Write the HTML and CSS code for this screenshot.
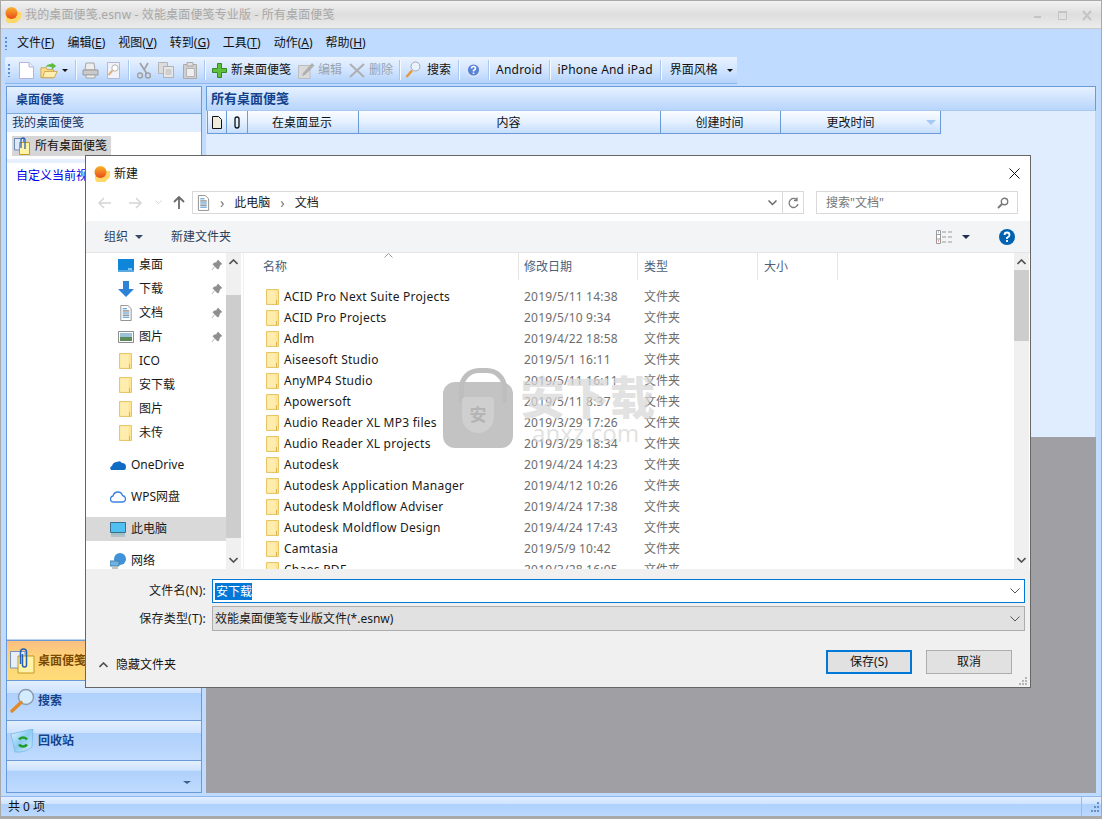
FILE: index.html
```html
<!DOCTYPE html>
<html lang="zh-CN">
<head>
<meta charset="utf-8">
<title>我的桌面便笺</title>
<link rel="stylesheet" href="styles.css">
</head>
<body>
<svg class="defs" width="0" height="0" aria-hidden="true">
  <defs>
    <linearGradient id="ball" x1="0" y1="0" x2="0" y2="1"><stop offset="0" stop-color="#fbb52c"/><stop offset="1" stop-color="#e8481a"/></linearGradient>
    <linearGradient id="bin" x1="0" y1="0" x2="1" y2="1"><stop offset="0" stop-color="#e6f5ff"/><stop offset=".5" stop-color="#8ccbf2"/><stop offset="1" stop-color="#d8eefc"/></linearGradient>
  </defs>
  <symbol id="folder" viewBox="0 0 13 16">
    <path d="M.5 .5H12.500V15.500H.5Z" fill="#fde595" stroke="#e8c667"/>
    <path d="M1.500 1.500H9.500V14.500H1.500Z" fill="#ffedb0"/>
    <path d="M10.500 11V15.500" stroke="#dcb44f" fill="none"/>
  </symbol>
  <symbol id="logo" viewBox="0 0 16 16">
    <path d="M1 5H16V11L11 16H3Q1 15 1 12Z" fill="#ffd766"/>
    <circle cx="6.500" cy="6" r="6" fill="url(#ball)"/>
  </symbol>
  <symbol id="pin" viewBox="0 0 12 12">
    <path d="M7 1L11 5L9.500 5.500L8 8V9.500L6.500 10L2 5.500L3 4L5.500 3.500L6.500 1.500ZM3.500 7.500L1 11" fill="#8e8e8e" stroke="#8e8e8e" stroke-width=".6"/>
  </symbol>
  <symbol id="doc" viewBox="0 0 14 17">
    <path d="M1.500 .5H9L12.500 4V16.500H1.500Z" fill="#fff" stroke="#8d8d8d"/>
    <path d="M3.500 4H8M3.500 8.500H10.500M3.500 13H10.500" stroke="#2a86d6"/>
    <path d="M3.500 6.300H10.500M3.500 10.800H10.500" stroke="#555"/>
  </symbol>
</svg>

<div class="app">
  <header class="titlebar">
    <svg class="ico16"><use href="#logo"/></svg>
    <span class="titletext">我的桌面便笺.esnw - 效能桌面便笺专业版 - 所有桌面便笺</span>
    <span class="winbtns">
      <svg width="60" height="12" viewBox="0 0 60 12"><path d="M1 8H8" stroke="#c4c4c4" stroke-width="2"/><path d="M25.500 2.500H33.500V10.500H25.500Z" fill="none" stroke="#c4c4c4"/><path d="M25 3H34" stroke="#c4c4c4" stroke-width="2"/><path d="M50 2L58 11M58 2L50 11" stroke="#c4c4c4" stroke-width="2"/></svg>
    </span>
  </header>

  <nav class="menubar">
    <i class="grip"></i>
    <span class="menu">文件(<u>F</u>)</span><span class="menu">编辑(<u>E</u>)</span><span class="menu">视图(<u>V</u>)</span><span class="menu">转到(<u>G</u>)</span><span class="menu">工具(<u>T</u>)</span><span class="menu">动作(<u>A</u>)</span><span class="menu">帮助(<u>H</u>)</span>
  </nav>

  <div class="toolbar">
    <i class="grip"></i>
    <svg class="tb w-new" width="15" height="17" viewBox="0 0 15 17"><path d="M.5 .5H10L14.500 5V16.500H.5Z" fill="#fff" stroke="#b5b5d8"/><path d="M10 .5V5H14.500" fill="#e8e8f4" stroke="#b5b5d8"/></svg>
    <svg class="tb w-open" width="18" height="17" viewBox="0 0 20 18"><path d="M1 6H7L8 8H15V17H1Z" fill="#fde08a" stroke="#c9a24a"/><path d="M3 17L5 10H19L16 17Z" fill="#ffeeb0" stroke="#c9a24a"/><path d="M6 5Q9 1 13 2V0L18 4L13 8V5Q9 4 6 5Z" fill="#5dbb3c"/></svg>
    <i class="caret small c-open"></i>
    <i class="sep s1"></i>
    <svg class="tb w-print" width="17" height="17" viewBox="0 0 17 17"><path d="M4 1H12L13 8H3Z" fill="#eee" stroke="#a5a5a5"/><path d="M1 8H16V13H1Z" fill="#c9c9c9" stroke="#9a9a9a"/><path d="M4 13H13V16H4Z" fill="#eee" stroke="#a5a5a5"/></svg>
    <svg class="tb w-prev" width="15" height="17" viewBox="0 0 15 17"><path d="M1.500 .5H13.500V16.500H1.500Z" fill="#f2f2fa" stroke="#b7b7cf"/><circle cx="9" cy="6" r="3.200" fill="#fff" stroke="#b5b5b5"/><path d="M6.500 8.500L2.500 13" stroke="#e2b27a" stroke-width="2"/></svg>
    <i class="sep s2"></i>
    <svg class="tb w-cut" width="14" height="17" viewBox="0 0 14 17"><path d="M3 1L10 12M11 1L7 8" stroke="#a0a0a0" stroke-width="1.600" fill="none"/><circle cx="3" cy="13.500" r="2.500" fill="none" stroke="#a0a0a0" stroke-width="1.400"/><circle cx="11" cy="13.500" r="2.500" fill="none" stroke="#a0a0a0" stroke-width="1.400"/></svg>
    <svg class="tb w-copy" width="16" height="16" viewBox="0 0 16 16"><path d="M.5 .5H9.500V11.500H.5Z" fill="#dcdcdc" stroke="#b5b5b5"/><path d="M5.500 4.500H15.500V15.500H5.500Z" fill="#e8e8e8" stroke="#b0b0b0"/><path d="M7.500 8H13.500M7.500 10H13.500M7.500 12H13.500" stroke="#b5b5b5"/></svg>
    <svg class="tb w-paste" width="16" height="17" viewBox="0 0 16 17"><path d="M1.500 2.500H14.500V16.500H1.500Z" fill="#cfcfcf" stroke="#aaa"/><path d="M5 .5H11V4H5Z" fill="#e0e0e0" stroke="#aaa"/><path d="M4.500 6.500H12.500V14.500H4.500Z" fill="#eee" stroke="#b5b5b5"/></svg>
    <i class="sep s3"></i>
    <svg class="tb w-plus" width="15" height="15" viewBox="0 0 15 15"><path d="M5.500 .5H9.500V5.500H14.500V9.500H9.500V14.500H5.500V9.500H.5V5.500H5.500Z" fill="#5fbf3b" stroke="#2f8a25"/></svg>
    <span class="tbtext t-new">新桌面便笺</span>
    <svg class="tb w-edit" width="17" height="17" viewBox="0 0 17 17"><path d="M.5 3.500H12V16.500H.5Z" fill="#dadada" stroke="#bdbdbd"/><path d="M5 11L14 1L16.500 3.500L7 13L4 14Z" fill="#b0b0b0"/></svg>
    <span class="tbtext dim t-edit">编辑</span>
    <svg class="tb w-del" width="16" height="15" viewBox="0 0 16 15"><path d="M1 1L15 14M15 1L1 14" stroke="#aeaeae" stroke-width="2"/></svg>
    <span class="tbtext dim t-del">删除</span>
    <i class="sep s4"></i>
    <svg class="tb w-find" width="16" height="18" viewBox="0 0 16 18"><circle cx="10.500" cy="5.500" r="4.500" fill="#e9f3ff" stroke="#a8a8a8"/><path d="M7 9.500L1.500 16" stroke="#e59a3e" stroke-width="2.600"/></svg>
    <span class="tbtext t-find">搜索</span>
    <i class="sep s5"></i>
    <svg class="tb w-help" width="15" height="16" viewBox="0 0 15 16"><circle cx="7.500" cy="8" r="7" fill="#dfe6f4"/><circle cx="7.500" cy="8" r="5.600" fill="#5a83d6"/><path d="M5.500 6.500Q5.500 4.500 7.500 4.500T9.500 6.500Q9.500 7.500 7.500 8.500V9.500M7.500 10.500V12" fill="none" stroke="#fff" stroke-width="1.500"/></svg>
    <i class="sep s6"></i>
    <span class="tbtext latin t-and">Android</span>
    <i class="sep s7"></i>
    <span class="tbtext latin t-iph">iPhone And iPad</span>
    <i class="sep s8"></i>
    <span class="tbtext t-ui">界面风格</span>
    <i class="caret small c-ui"></i>
  </div>

  <main class="workspace">
    <aside class="side">
      <h2 class="side-head">桌面便笺</h2>
      <div class="side-sub">我的桌面便笺</div>
      <div class="side-body">
        <div class="tree-sel">
          <svg width="17" height="18" viewBox="0 0 17 18"><path d="M.5 1.500H9.500V13H.5Z" fill="#dfe9fb" stroke="#6f89b6"/><path d="M5.500 5.500H15.500V17.500H5.500Z" fill="#fff3a8" stroke="#c29a1e"/><path d="M7 11V3Q7 1 9 1T11 3V12" fill="none" stroke="#2b62b4" stroke-width="1.300"/></svg>
          <span>所有桌面便笺</span>
        </div>
        <div class="side-band"></div>
        <a class="side-link">自定义当前视图</a>
      </div>
      <div class="navbtn active">
        <svg width="25" height="26" viewBox="0 0 25 26"><path d="M.5 3.500H15V20H.5Z" fill="#e8effa" stroke="#7a93bd"/><path d="M8 8H24V25H8Z" fill="#fff3a8" stroke="#c29a1e"/><path d="M10.500 16V4Q10.500 1 13.500 1T16.500 4V17Q16.500 19 14.500 19T12.500 17V6" fill="none" stroke="#2460b4" stroke-width="1.500"/></svg>
        <span>桌面便笺</span>
      </div>
      <div class="navbtn">
        <svg width="25" height="25" viewBox="0 0 25 25"><circle cx="16" cy="9" r="7.500" fill="#d4ecff" stroke="#8a9bb0" stroke-width="1.400"/><path d="M11 14.500L2 23" stroke="#e08a2a" stroke-width="3.400" stroke-linecap="round"/></svg>
        <span>搜索</span>
      </div>
      <div class="navbtn">
        <svg width="25" height="24" viewBox="0 0 25 24"><path d="M1 5L23 0L22 18Q15 24 5 23Z" fill="url(#bin)" stroke="#6fb5e6" stroke-width=".7"/><path d="M9 10.500A5 5 0 0 1 17 10.500M17 15.500A5 5 0 0 1 9 15.500" fill="none" stroke="#1f9d2b" stroke-width="2.600"/></svg>
        <span>回收站</span>
      </div>
      <div class="navbtn last"><i class="caret tiny"></i></div>
    </aside>

    <section class="content">
      <h2 class="content-head">所有桌面便笺</h2>
      <div class="content-body">
        <div class="thead">
          <div class="th c1"><svg width="10" height="13" viewBox="0 0 10 13"><path d="M.5 .5H6.500L9.500 3.500V12.500H.5Z" fill="#f1eddd" stroke="#111"/></svg></div>
          <div class="th c2"><svg width="8" height="13" viewBox="0 0 8 13"><path d="M2 10V3Q2 1 4 1T6 3V10Q6 12 4 12T2 10V4" fill="none" stroke="#111" stroke-width="1.300"/></svg></div>
          <div class="th c3">在桌面显示</div>
          <div class="th c4">内容</div>
          <div class="th c5">创建时间</div>
          <div class="th c6">更改时间<i class="sortmark"></i></div>
        </div>
      </div>
      <div class="mdi"></div>
    </section>
  </main>

  <footer class="status">
    <span>共 0 项</span>
    <span class="status-grip">
      <svg width="14" height="12" viewBox="0 0 14 12"><path d="M10 1H12M7 5H9M10 5H12M4 9H6M7 9H9M10 9H12" stroke="#6b8fc0" stroke-width="2" stroke-dasharray="2 1"/></svg>
    </span>
  </footer>
</div>

<div class="dialog">
  <div class="dlg-title">
    <svg class="ico16"><use href="#logo"/></svg>
    <span>新建</span>
    <svg class="dlg-close" width="11" height="11" viewBox="0 0 11 11"><path d="M.5 .5L10.500 10.500M10.500 .5L.5 10.500" stroke="#111" stroke-width="1"/></svg>
  </div>

  <div class="dlg-nav">
    <svg class="arrow a1" width="14" height="12" viewBox="0 0 14 12"><path d="M6 1L1 6L6 11M1 6H13" fill="none" stroke="#d5d5d5" stroke-width="1.500"/></svg>
    <svg class="arrow a2" width="14" height="12" viewBox="0 0 14 12"><path d="M8 1L13 6L8 11M13 6H1" fill="none" stroke="#d5d5d5" stroke-width="1.500"/></svg>
    <svg class="arrow a3" width="7" height="5" viewBox="0 0 7 5"><path d="M.5 .5L3.500 3.500L6.500 .5" fill="none" stroke="#d5d5d5"/></svg>
    <svg class="arrow a4" width="12" height="13" viewBox="0 0 12 13"><path d="M1 6L6 1L11 6M6 1V13" fill="none" stroke="#6a6a6a" stroke-width="1.800"/></svg>
    <div class="addr">
      <svg class="addr-doc" width="13" height="16"><use href="#doc"/></svg>
      <span class="crumbsep">›</span><span class="crumb">此电脑</span><span class="crumbsep">›</span><span class="crumb">文档</span>
      <span class="addr-end">
        <svg width="9" height="6" viewBox="0 0 9 6"><path d="M.5 .5L4.500 4.500L8.500 .5" fill="none" stroke="#6a6a6a" stroke-width="1.500"/></svg>
        <i class="addr-div"></i>
        <svg width="11" height="12" viewBox="0 0 11 12"><path d="M9 3A4.500 4.500 0 1 0 10 7M9 .5V3.500H6" fill="none" stroke="#7a7a7a" stroke-width="1.300"/></svg>
      </span>
    </div>
    <div class="searchbox">
      <span>搜索"文档"</span>
      <svg width="12" height="12" viewBox="0 0 12 12"><circle cx="7.500" cy="4.500" r="3.200" fill="none" stroke="#7a7a7a" stroke-width="1.400"/><path d="M5 7L1 11" stroke="#7a7a7a" stroke-width="2"/></svg>
    </div>
  </div>

  <div class="dlg-cmd">
    <span class="cmd">组织</span><i class="cmdcaret"></i>
    <span class="cmd new">新建文件夹</span>
    <span class="cmd-right">
      <svg width="16" height="14" viewBox="0 0 16 14"><path d="M.5 .5H4.500V13.500H.5ZM.5 4.500H4.500M.5 9H4.500" fill="#fff" stroke="#9a9a9a"/><path d="M6 2H10M12 2H16M6 7H10M12 7H16M6 12H10M12 12H16" stroke="#9a9a9a"/><path d="M2 2H3" stroke="#3a8fd6"/><path d="M2 11H3" stroke="#e04040"/></svg>
      <i class="cmdcaret dark"></i>
      <svg class="helpdot" width="16" height="16" viewBox="0 0 16 16"><circle cx="8" cy="8" r="8" fill="#0063b1"/><path d="M5.500 6Q5.500 3.500 8 3.500T10.500 6Q10.500 7.500 8 8.700V10M8 11V13" fill="none" stroke="#fff" stroke-width="1.800"/></svg>
    </span>
  </div>

  <div class="dlg-main">
    <div class="tree">
      <div class="tree-row"><svg class="ti" width="16" height="13" viewBox="0 0 16 13"><path d="M0 0H16V11H0Z" fill="#0f86d8"/><path d="M0 11H16V13H0Z" fill="#5aa9e0"/><path d="M10 10H14" stroke="#fff"/></svg><span>桌面</span><svg class="pin" width="12" height="12"><use href="#pin"/></svg></div>
      <div class="tree-row"><svg class="ti" width="16" height="16" viewBox="0 0 16 16"><path d="M5 0H11V8H16L8 16L0 8H5Z" fill="#2c82d6"/></svg><span>下载</span><svg class="pin" width="12" height="12"><use href="#pin"/></svg></div>
      <div class="tree-row"><svg class="ti" width="16" height="16" viewBox="0 0 14 17"><use href="#doc"/></svg><span>文档</span><svg class="pin" width="12" height="12"><use href="#pin"/></svg></div>
      <div class="tree-row"><svg class="ti" width="16" height="12" viewBox="0 0 16 12"><path d="M.5 .5H15.500V11.500H.5Z" fill="#fff" stroke="#8d8d8d"/><path d="M2 2H14V6H2Z" fill="#9cc1d8"/><path d="M2 6H14V10H2Z" fill="#5e8a5a"/></svg><span>图片</span><svg class="pin" width="12" height="12"><use href="#pin"/></svg></div>
      <div class="tree-row"><svg class="ti f" width="13" height="16"><use href="#folder"/></svg><span>ICO</span></div>
      <div class="tree-row"><svg class="ti f" width="13" height="16"><use href="#folder"/></svg><span>安下载</span></div>
      <div class="tree-row"><svg class="ti f" width="13" height="16"><use href="#folder"/></svg><span>图片</span></div>
      <div class="tree-row"><svg class="ti f" width="13" height="16"><use href="#folder"/></svg><span>未传</span></div>
      <div class="tree-row top"><svg class="ti" width="16" height="10" viewBox="0 0 16 10"><path d="M1 10Q-1 7 2 6Q3 2 7 2Q10 0 12 3Q16 3 16 7Q16 10 14 10Z" fill="#0f6cc4"/></svg><span>OneDrive</span></div>
      <div class="tree-row top"><svg class="ti" width="16" height="12" viewBox="0 0 16 12"><path d="M3.500 11Q.5 11 .5 8Q.5 5.500 3 5Q4 1 8 1Q11.500 1 12.500 4.500Q15.500 5 15.500 8Q15.500 11 12.500 11Z" fill="#fff" stroke="#3b82e0" stroke-width="1.300"/></svg><span>WPS网盘</span></div>
      <div class="tree-row sel"><svg class="ti" width="16" height="15" viewBox="0 0 16 15"><path d="M.5 .5H15.500V10.500H.5Z" fill="#50c0f0" stroke="#3b6f90"/><path d="M1 12H15" stroke="#6aa"/><path d="M1 14H15" stroke="#8fa9bd"/></svg><span>此电脑</span></div>
      <div class="tree-row"><svg class="ti" width="16" height="16" viewBox="0 0 16 16"><circle cx="10" cy="6" r="6" fill="#3f93d8"/><path d="M0 8H9V13H0Z" fill="#6fb2e4" stroke="#4a7fa8"/><path d="M2 15H8" stroke="#888"/></svg><span>网络</span></div>
    </div>
    <div class="vscroll nav">
      <svg class="sb-a" width="9" height="6" viewBox="0 0 9 6"><path d="M.5 5L4.500 1L8.500 5" fill="none" stroke="#505050" stroke-width="1.600"/></svg>
      <i class="thumb t-nav"></i>
      <svg class="sb-a" width="9" height="6" viewBox="0 0 9 6"><path d="M.5 1L4.500 5L8.500 1" fill="none" stroke="#505050" stroke-width="1.600"/></svg>
    </div>
    <div class="list">
      <div class="lhead">
        <div class="lh h1">名称<svg class="sortcaret" width="9" height="5" viewBox="0 0 9 5"><path d="M.5 4.500L4.500 .5L8.500 4.500" fill="none" stroke="#9a9a9a"/></svg></div>
        <div class="lh h2">修改日期</div>
        <div class="lh h3">类型</div>
        <div class="lh h4">大小</div>
      </div>
      <div class="lrows">
        <div class="lrow"><div class="lname"><svg width="13" height="16"><use href="#folder"/></svg><span>ACID Pro Next Suite Projects</span></div><div class="ldate">2019/5/11 14:38</div><div class="ltype">文件夹</div></div>
        <div class="lrow"><div class="lname"><svg width="13" height="16"><use href="#folder"/></svg><span>ACID Pro Projects</span></div><div class="ldate">2019/5/10 9:34</div><div class="ltype">文件夹</div></div>
        <div class="lrow"><div class="lname"><svg width="13" height="16"><use href="#folder"/></svg><span>Adlm</span></div><div class="ldate">2019/4/22 18:58</div><div class="ltype">文件夹</div></div>
        <div class="lrow"><div class="lname"><svg width="13" height="16"><use href="#folder"/></svg><span>Aiseesoft Studio</span></div><div class="ldate">2019/5/1 16:11</div><div class="ltype">文件夹</div></div>
        <div class="lrow"><div class="lname"><svg width="13" height="16"><use href="#folder"/></svg><span>AnyMP4 Studio</span></div><div class="ldate">2019/5/11 16:11</div><div class="ltype">文件夹</div></div>
        <div class="lrow"><div class="lname"><svg width="13" height="16"><use href="#folder"/></svg><span>Apowersoft</span></div><div class="ldate">2019/5/11 8:37</div><div class="ltype">文件夹</div></div>
        <div class="lrow"><div class="lname"><svg width="13" height="16"><use href="#folder"/></svg><span>Audio Reader XL MP3 files</span></div><div class="ldate">2019/3/29 17:26</div><div class="ltype">文件夹</div></div>
        <div class="lrow"><div class="lname"><svg width="13" height="16"><use href="#folder"/></svg><span>Audio Reader XL projects</span></div><div class="ldate">2019/3/29 18:34</div><div class="ltype">文件夹</div></div>
        <div class="lrow"><div class="lname"><svg width="13" height="16"><use href="#folder"/></svg><span>Autodesk</span></div><div class="ldate">2019/4/24 14:23</div><div class="ltype">文件夹</div></div>
        <div class="lrow"><div class="lname"><svg width="13" height="16"><use href="#folder"/></svg><span>Autodesk Application Manager</span></div><div class="ldate">2019/4/12 10:26</div><div class="ltype">文件夹</div></div>
        <div class="lrow"><div class="lname"><svg width="13" height="16"><use href="#folder"/></svg><span>Autodesk Moldflow Adviser</span></div><div class="ldate">2019/4/24 17:38</div><div class="ltype">文件夹</div></div>
        <div class="lrow"><div class="lname"><svg width="13" height="16"><use href="#folder"/></svg><span>Autodesk Moldflow Design</span></div><div class="ldate">2019/4/24 17:43</div><div class="ltype">文件夹</div></div>
        <div class="lrow"><div class="lname"><svg width="13" height="16"><use href="#folder"/></svg><span>Camtasia</span></div><div class="ldate">2019/5/9 10:42</div><div class="ltype">文件夹</div></div>
        <div class="lrow"><div class="lname"><svg width="13" height="16"><use href="#folder"/></svg><span>Chaos PDF</span></div><div class="ldate">2019/3/28 16:05</div><div class="ltype">文件夹</div></div>
      </div>
    </div>
    <div class="vscroll main">
      <svg class="sb-a" width="9" height="6" viewBox="0 0 9 6"><path d="M.5 5L4.500 1L8.500 5" fill="none" stroke="#505050" stroke-width="1.600"/></svg>
      <i class="thumb t-main"></i>
      <svg class="sb-a" width="9" height="6" viewBox="0 0 9 6"><path d="M.5 1L4.500 5L8.500 1" fill="none" stroke="#505050" stroke-width="1.600"/></svg>
    </div>
  </div>

  <div class="dlg-foot">
    <div class="field">
      <label>文件名(N):</label>
      <div class="combo focus"><span class="selected">安下载</span><svg width="10" height="6" viewBox="0 0 10 6"><path d="M.5 .5L5 5L9.500 .5" fill="none" stroke="#555"/></svg></div>
    </div>
    <div class="field second">
      <label>保存类型(T):</label>
      <div class="combo gray"><span class="plain">效能桌面便笺专业版文件(*.esnw)</span><svg width="10" height="6" viewBox="0 0 10 6"><path d="M.5 .5L5 5L9.500 .5" fill="none" stroke="#555"/></svg></div>
    </div>
    <div class="foot-actions">
      <span class="hide">
        <svg width="9" height="6" viewBox="0 0 9 6"><path d="M.5 5L4.500 1L8.500 5" fill="none" stroke="#505050" stroke-width="1.600"/></svg>
        隐藏文件夹
      </span>
      <span class="btn primary">保存(S)</span>
      <span class="btn">取消</span>
    </div>
    <svg class="dlg-grip" width="9" height="9" viewBox="0 0 9 9"><path d="M7 1H9V3H7ZM4 4H6V6H4ZM7 4H9V6H7ZM1 7H3V9H1ZM4 7H6V9H4ZM7 7H9V9H7Z" fill="#b5b5b5"/></svg>
  </div>
</div>

<div class="watermark">
  <div class="wm-bag"><span>安</span></div>
  <div class="wm-text"><div class="wm-cn">安下载</div><div class="wm-en">anxz.com</div></div>
</div>
</body>
</html>
```

FILE: styles.css
```css
* { box-sizing: border-box; }
html, body { margin: 0; padding: 0; }
body {
  width: 1102px; height: 819px; overflow: hidden; position: relative;
  font: 12px/16px "Noto Sans", "Noto Sans CJK SC", sans-serif;
  color: #111; background: #bfdbff;
}
.defs { position: absolute; }
.ico16 { width: 16px; height: 16px; flex: none; }
i { display: block; flex: none; }

/* main window */
.app { width: 1102px; height: 819px; display: flex; flex-direction: column; border: solid #a9a9a9; border-width: 1px 1px 3px 1px; }
.titlebar {
  height: 28px; flex: none; display: flex; align-items: center; padding: 0 5px 0 4px; gap: 4px;
  background: linear-gradient(#f2f2f2, #e6e6e6 30%, #dedede 50%, #ececec);
  border-bottom: 1px solid #c9c9c9;
}
.titletext { color: #a8a8a8; font-size: 12px; letter-spacing: .15px; }
.winbtns { margin-left: auto; display: flex; padding-right: 3px; }

.menubar { height: 28px; flex: none; display: flex; align-items: center; padding-left: 4px; background: #bfdbff; }
.grip { width: 2px; height: 13px; background: repeating-linear-gradient(#5b8fd6 0 2px, transparent 2px 4px); }
.menu { margin-right: 13px; color: #111; }
.menubar .grip { margin-right: 10px; }
.menu u { text-decoration: underline; }

.toolbar {
  height: 27px; flex: none; width: 732px; margin-left: 4px; display: flex; align-items: center; padding-left: 3px;
  background: linear-gradient(#eaf3ff, #cfe3ff 55%, #b4d2fb);
  border-bottom: 1px solid #8cb6ec; border-radius: 2px 0 0 0;
}
.tb { flex: none; }
.sep { width: 1px; height: 20px; background: #f5faff; box-shadow: -1px 0 0 #a9c8ef; flex: none; }
.tbtext { flex: none; }
.tbtext.dim { color: #9aa3ad; }
.tbtext.latin { letter-spacing: .2px; }
.caret { width: 0; height: 0; border: solid transparent; flex: none; }
.caret.small { border-width: 3px 3px 0; border-top-color: #111; }
.caret.tiny { border-width: 3px 4px 0; border-top-color: #3f5f8f; }
.w-new { margin-left: 9px; }
.w-open { margin-left: 6px; }
.c-open { margin-left: 4px; }
.s1 { margin-left: 8px; }
.w-print { margin-left: 5px; }
.w-prev { margin-left: 7px; }
.s2 { margin-left: 8px; }
.w-cut { margin-left: 7px; }
.w-copy { margin-left: 7px; }
.w-paste { margin-left: 8px; }
.s3 { margin-left: 7px; }
.w-plus { margin-left: 6px; }
.t-new { margin-left: 4px; }
.w-edit { margin-left: 7px; }
.t-edit { margin-left: 3px; }
.w-del { margin-left: 7px; }
.t-del { margin-left: 4px; }
.s4 { margin-left: 7px; }
.w-find { margin-left: 4px; }
.t-find { margin-left: 6px; }
.s5 { margin-left: 8px; }
.w-help { margin-left: 6px; }
.s6 { margin-left: 8px; }
.t-and { margin-left: 6px; }
.s7 { margin-left: 8px; }
.t-iph { margin-left: 6px; }
.s8 { margin-left: 8px; }
.t-ui { margin-left: 8px; }
.c-ui { margin-left: 9px; }

.workspace { flex: 1; min-height: 0; display: flex; padding: 2px 5px 3px 5px; gap: 4px; background: #bfdbff; }
.side { width: 196px; flex: none; display: flex; flex-direction: column; border: 1px solid #6a9bd6; background: #fff; }
.side-head {
  margin: 0; height: 27px; flex: none; padding: 4px 0 0 9px; font-size: 12px; line-height: 18px; font-weight: 700; color: #15428b;
  background: linear-gradient(#e6f1ff, #bcd8fd); border-bottom: 1px solid #7ba8df;
}
.side-sub { height: 18px; flex: none; padding: 1px 0 0 5px; color: #15315f; background: #e0edff; }
.side-body { flex: 1; padding-top: 4px; display: flex; flex-direction: column; border-bottom: 1px solid #bcd3f0; }
.tree-sel { display: flex; align-items: center; gap: 4px; width: 99px; height: 20px; margin-left: 5px; background: #d6d6d6; padding-left: 2px; }
.side-band { height: 4px; margin-top: 3px; background: #e6f0ff; }
.side-link { color: #0000e6; margin: 5px 0 0 9px; }
.navbtn {
  height: 40px; flex: none; display: flex; align-items: center; gap: 3px; padding-left: 3px;
  font-weight: 700; color: #15428b;
  background: linear-gradient(#e3efff, #cfe3ff 30%, #aed0fb 32%, #c0dbff);
  border-top: 1px solid #6a9bd6;
}
.navbtn svg { flex: none; }
.navbtn.active { background: linear-gradient(#fbbf82, #fdd27a 40%, #ffdc78); color: #7b4a00; }
.navbtn.last { height: 32px; justify-content: flex-end; padding: 12px 10px 0 0; align-items: center; }

.content { flex: 1; min-width: 0; display: flex; flex-direction: column; }
.content-head {
  margin: 0; height: 25px; flex: none; padding: 2px 0 0 4px; font-size: 13px; line-height: 18px; font-weight: 700; color: #15428b;
  background: linear-gradient(#e6f1ff, #b8d5fc); border: 1px solid #6a9bd6; border-bottom-color: #a9c8ef;
}
.content-body { height: 326px; flex: none; background: #e0edff; border-right: 1px solid #bcd6f8; }
.thead { display: flex; height: 23px; width: 734px; margin-left: 1px; border-bottom: 1px solid #6a9bd6; border-left: 1px solid #6a9bd6; border-right: 1px solid #6a9bd6; background: linear-gradient(#fbfdff, #e4f0ff 50%, #c6defe); }
.th { display: flex; align-items: center; justify-content: center; padding-top: 1px; border-right: 1px solid #6a9bd6; position: relative; flex: none; }
.th:last-child { border-right: 0; }
.c1 { width: 19px; } .c2 { width: 21px; } .c3 { width: 111px; padding-right: 2px; } .c4 { width: 302px; padding-right: 2px; } .c5 { width: 120px; padding-right: 2px; } .c6 { flex: 1; padding-right: 20px; }
.sortmark { position: absolute; right: 4px; top: 9px; width: 0; height: 0; border: solid transparent; border-width: 5px 5px 0; border-top-color: #a6c8f4; }
.mdi { flex: 1; background: #a0a0a4; }

.status { height: 20px; flex: none; display: flex; align-items: center; padding-left: 7px; border-top: 1px solid #8fb9ee; background: linear-gradient(#e3efff, #cfe3ff 35%, #aed0fb 40%, #bcd9ff); }
.status-grip { margin-left: auto; height: 100%; width: 20px; border-left: 1px solid #9fb9da; display: flex; align-items: flex-end; padding: 0 0 2px 5px; }

/* dialog */
.dialog {
  position: absolute; left: 85px; top: 155px; width: 946px; height: 533px;
  display: flex; flex-direction: column; background: #fff; border: 1px solid #666;
}
.dlg-title { height: 35px; flex: none; display: flex; align-items: center; padding-left: 8px; gap: 4px; position: relative; }
.dlg-close { margin-left: auto; margin-right: 10px; }
.dlg-nav { height: 23px; flex: none; display: flex; align-items: center; }
.arrow { flex: none; }
.a1 { margin-left: 12px; } .a2 { margin-left: 16px; } .a3 { margin-left: 13px; } .a4 { margin-left: 11px; }
.addr { width: 612px; height: 23px; margin-left: 7px; flex: none; border: 1px solid #d9d9d9; display: flex; align-items: center; padding-left: 4px; }
.crumbsep { color: #777; font-size: 14px; margin: 0 10px 0 10px; line-height: 14px; }
.crumb { color: #1a1a1a; }
.addr-doc { flex: none; }
.addr-end { margin-left: auto; height: 100%; display: flex; align-items: center; }
.addr-end svg:first-child { margin-right: 5px; }
.addr-div { width: 1px; height: 100%; background: #d9d9d9; margin-right: 5px; }
.addr-end svg:last-child { margin-right: 4px; }
.searchbox { width: 202px; height: 23px; margin-left: 12px; flex: none; border: 1px solid #d9d9d9; display: flex; align-items: center; justify-content: space-between; padding: 0 8px 0 9px; color: #767676; }
.dlg-cmd { height: 32px; margin-top: 7px; flex: none; display: flex; align-items: center; background: #f3f4f6; border-bottom: 1px solid #e5e5e5; padding-left: 18px; color: #2d3e55; }
.cmdcaret { width: 0; height: 0; border: solid transparent; border-width: 4px 4px 0; border-top-color: #3b4a60; margin-left: 7px; flex: none; }
.cmd.new { margin-left: 28px; }
.cmd-right { margin-left: auto; display: flex; align-items: center; padding-right: 15px; }
.cmdcaret.dark { margin-left: 10px; border-top-color: #1f2f4a; }
.helpdot { margin-left: 29px; }
.dlg-main { height: 316px; flex: none; display: flex; overflow: hidden; }
.tree { width: 140px; flex: none; overflow: hidden; }
.tree-row { height: 24px; display: flex; align-items: center; padding-left: 32px; position: relative; color: #1a1a1a; }
.tree-row .ti { width: 16px; flex: none; margin-right: 5px; }
.tree-row .ti.f { width: 13px; margin-left: 1px; margin-right: 7px; }
.tree-row.top { margin-top: 8px; padding-left: 24px; }
.tree-row.top .ti { margin-right: 5px; }
.tree-row.sel, .tree-row:last-child { margin-top: 8px; padding-left: 24px; }
.tree-row.sel { background: #d9d9d9; }
.pin { position: absolute; right: 3px; top: 6px; }
.vscroll { display: flex; flex-direction: column; align-items: center; flex: none; background: #f0f0f0; }
.vscroll.nav { width: 15px; }
.vscroll.main { width: 15px; margin-right: 1px; }
.sb-a { flex: none; margin: 6px 0; }
.thumb { background: #cdcdcd; width: 100%; flex: none; }
.t-nav { height: 243px; margin-top: 24px; margin-bottom: auto; }
.t-main { height: 71px; margin-top: -1px; margin-bottom: auto; }
.list { flex: 1; min-width: 0; margin-left: 2px; display: flex; flex-direction: column; overflow: hidden; border-left: 1px solid #f2f2f2; }
.lhead { display: flex; height: 27px; flex: none; color: #4c607a; }
.lh { border-right: 1px solid #e5e5e5; padding-top: 6px; position: relative; flex: none; }
.h1 { width: 275px; padding-left: 19px; }
.h2 { width: 119px; padding-left: 5px; }
.h3 { width: 120px; padding-left: 6px; }
.h4 { width: 80px; padding-left: 6px; }
.sortcaret { position: absolute; left: 140px; top: 0; }
.lrows { padding-top: 6px; }
.lrow { display: flex; height: 21px; align-items: center; }
.lname { width: 280px; flex: none; display: flex; align-items: center; gap: 5px; padding-left: 22px; color: #1a1a1a; letter-spacing: .25px; }
.ldate { width: 120px; flex: none; color: #6d6d6d; letter-spacing: .2px; }
.ltype { color: #6d6d6d; }
.dlg-foot { flex: 1; background: #f0f0f0; position: relative; padding-top: 10px; display: flex; flex-direction: column; }
.field { display: flex; align-items: center; height: 24px; flex: none; }
.field.second { height: 25px; margin-top: 3px; }
.field label { width: 121px; text-align: right; padding-right: 1px; flex: none; color: #1a1a1a; letter-spacing: .2px; }
.combo { margin-left: 5px; width: 813px; height: 100%; flex: none; display: flex; align-items: center; justify-content: space-between; padding: 0 4px 0 2px; border: 1px solid #adadad; }
.combo.focus { border-color: #0078d7; background: #fff; }
.combo.gray { background: #e1e1e1; }
.selected { background: #0078d7; color: #fff; padding: 0 0 0 1px; width: 37px; line-height: 17px; }
.plain { color: #1a1a1a; }
.foot-actions { display: flex; align-items: center; margin-top: 19px; height: 24px; flex: none; }
.hide { display: flex; align-items: center; gap: 8px; margin-left: 13px; margin-right: auto; position: relative; top: 3px; }
.btn { width: 86px; height: 24px; flex: none; display: flex; align-items: center; justify-content: center; background: #e1e1e1; border: 1px solid #adadad; margin-right: 18px; }
.btn.primary { border: 2px solid #0078d7; margin-right: 14px; }
.dlg-grip { position: absolute; right: 3px; bottom: 2px; }

/* watermark */
.watermark { position: absolute; left: 443px; top: 368px; display: flex; gap: 7px; z-index: 5; }
.wm-bag { width: 70px; height: 80px; position: relative; display: flex; align-items: center; justify-content: center; padding-top: 14px; }
.wm-bag::before { content: ""; position: absolute; left: 16px; top: 0; width: 38px; height: 30px; border: 5px solid rgba(185,185,185,.9); border-bottom: 0; border-radius: 20px 20px 0 0; }
.wm-bag::after { content: ""; position: absolute; left: 0; top: 14px; right: 0; bottom: 0; background: rgba(190,190,190,.92); border-radius: 12px; }
.wm-bag span { position: relative; z-index: 1; color: #b4b4b4; font-size: 17px; font-weight: 700; background: #cfcfcf; width: 32px; height: 36px; display: flex; align-items: center; justify-content: center; border-radius: 4px 4px 16px 16px; }
.wm-text { color: rgba(215,215,215,.72); font-weight: 900; }
.wm-cn { font-size: 45px; line-height: 46px; margin-top: 7px; }
.wm-en { font-size: 24px; line-height: 24px; font-weight: 400; padding-left: 12px; }
```
